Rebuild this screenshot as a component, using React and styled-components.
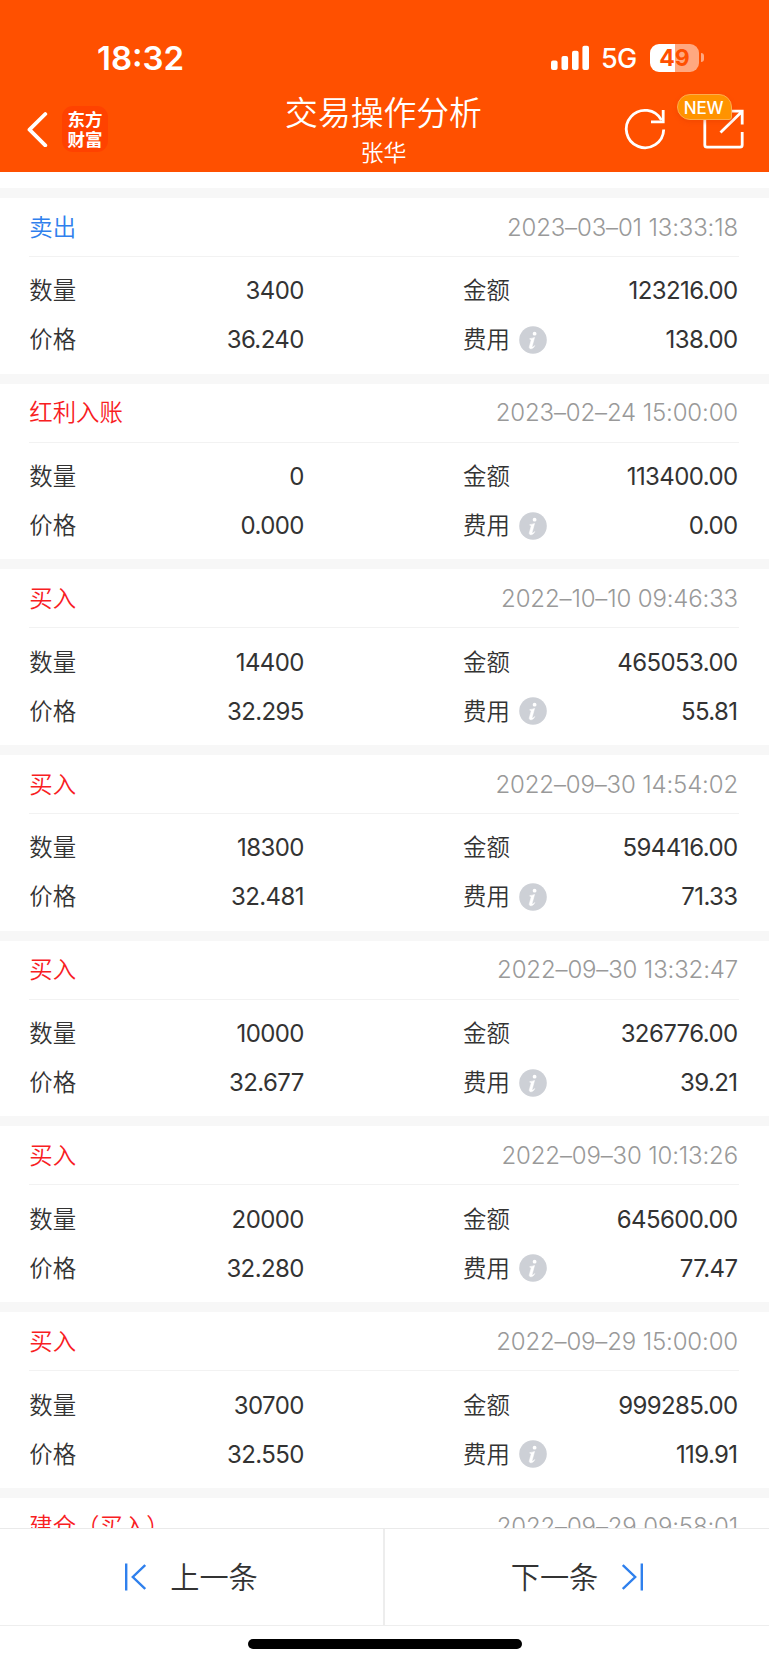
import React from 'react';
import styled, { createGlobalStyle } from 'styled-components';

const GlobalStyle = createGlobalStyle`
    * {
        box-sizing: border-box;
    }
    body {
        margin: 0;
        background: #fff;
        color: #333;
        font-family: Inter, "Noto Sans CJK SC", sans-serif;
    }
`;
const Screen = styled.div`
    display: flex;
    flex-direction: column;
    width: 769px;
    height: 1665px;
    overflow: hidden;
`;
const Header = styled.header`
    flex: none;
    height: 172px;
    background: #ff5000;
    color: #fff;
`;
const StatusBar = styled.div`
    display: flex;
    align-items: center;
    justify-content: space-between;
    height: 94px;
    padding: 21px 65px 0 97px;
`;
const Clock = styled.div`
    font-size: 33px;
    font-weight: 600;
    line-height: 40px;
`;
const StatusIcons = styled.div`
    display: flex;
    align-items: center;
`;
const Network = styled.span`
    width: 36px;
    margin: 2px 13px 0 11px;
    font-size: 27px;
    font-weight: 500;
    line-height: 32px;
    letter-spacing: -0.6px;
`;
const Battery = styled.div`
    display: flex;
    align-items: center;
    justify-content: center;
    width: 49px;
    height: 28px;
    border-radius: 9px;
    background: linear-gradient(to right, #fff 50%, #ffa880 50%);
    color: #ff5000;
    font-size: 23px;
    font-weight: 700;
    line-height: 28px;
`;
const BatteryTip = styled.span`
    width: 3px;
    height: 9px;
    margin-left: 2px;
    border-radius: 0 5px 5px 0;
    background: #ffa880;
`;
const NavBar = styled.div`
    display: grid;
    grid-template-columns: 240px 1fr 240px;
    height: 78px;
`;
const NavLeft = styled.div`
    display: flex;
    align-items: flex-start;
    padding: 12px 0 0 25px;
    svg {
        margin-top: 5px;
    }
`;
const Logo = styled.div`
    width: 46px;
    height: 46px;
    margin-left: 14px;
    padding-top: 4px;
    border-radius: 11px;
    background: #ff4200;
    font-size: 17.5px;
    font-weight: 700;
    line-height: 19.5px;
    text-align: center;
`;
const Heading = styled.div`
    padding-right: 2px;
    text-align: center;
`;
const Title = styled.h1`
    margin: 0;
    font-size: 32.8px;
    font-weight: 350;
    line-height: 39px;
`;
const SubTitle = styled.div`
    font-size: 23px;
    font-weight: 350;
    line-height: 40px;
`;
const NavRight = styled.div`
    display: flex;
    align-items: flex-start;
    justify-content: flex-end;
    padding: 12px 25px 0 0;
`;
const Share = styled.div`
    position: relative;
    height: 46px;
    margin-left: 35px;
`;
const Badge = styled.span`
    position: absolute;
    left: -26px;
    top: -12px;
    width: 55px;
    height: 26px;
    padding-right: 2px;
    border: 1px solid #ffab4d;
    border-radius: 13px 13px 3px 13px;
    background: #ff9300;
    box-shadow: 0 2px 4px rgba(220, 60, 0, 0.35);
    font-size: 17px;
    font-weight: 500;
    line-height: 26px;
    letter-spacing: -0.2px;
    text-align: center;
`;
const List = styled.main`
    flex: 1;
    min-height: 0;
    padding-top: 16px;
    overflow: hidden;
`;
const Card = styled.section`
    height: 185.7px;
    padding: 0 30px 0 29.3px;
    border-top: 10px solid #f7f7f7;
`;
const CardHead = styled.div`
    display: flex;
    align-items: center;
    justify-content: space-between;
    height: 59px;
    border-bottom: 1px solid #f2f2f2;
`;
const Kind = styled.span`
    padding-bottom: 3px;
    color: ${props => (props.$sell ? '#2f80ed' : '#f8201f')};
    font-size: 23.4px;
    font-weight: 350;
`;
const Time = styled.time`
    padding-right: 1px;
    color: #999;
    font-size: 24px;
    font-weight: 350;
    letter-spacing: -0.15px;
`;
const Details = styled.div`
    display: grid;
    grid-template-columns: 276px 276px;
    grid-auto-rows: 49px;
    justify-content: space-between;
    padding-top: 9.4px;
`;
const Field = styled.div`
    display: flex;
    align-items: center;
    svg {
        margin-left: 9px;
    }
`;
const Label = styled.span`
    padding-bottom: 3px;
    font-size: 23.4px;
    font-weight: 350;
`;
const Value = styled.span`
    margin-left: auto;
    padding-right: 1.5px;
    font-size: 24px;
    font-weight: 370;
    letter-spacing: -0.6px;
`;
const Footer = styled.footer`
    display: flex;
    flex: none;
    height: 98px;
    border-top: 1px solid #eaeaea;
    border-bottom: 1px solid #eee;
    background: #fff;
`;
const Pager = styled.button`
    display: flex;
    align-items: center;
    justify-content: center;
    gap: 24px;
    width: ${props => (props.$next ? '384px' : '385px')};
    padding: 0;
    border: 0;
    border-right: ${props => (props.$next ? '0' : '2px solid #ededed')};
    background: none;
    color: #333;
    font-family: inherit;
`;
const PagerText = styled.span`
    padding-bottom: 4px;
    font-size: 29.2px;
    font-weight: 350;
`;
const HomeArea = styled.div`
    display: flex;
    flex: none;
    justify-content: center;
    height: 39px;
    padding-top: 13px;
`;
const HomeBar = styled.div`
    width: 274px;
    height: 10px;
    border-radius: 5px;
    background: #000;
`;

const records = [
    { kind: '卖出', sell: true, time: '2023–03–01 13:33:18', count: '3400', amount: '123216.00', price: '36.240', fee: '138.00' },
    { kind: '红利入账', time: '2023–02–24 15:00:00', count: '0', amount: '113400.00', price: '0.000', fee: '0.00' },
    { kind: '买入', time: '2022–10–10 09:46:33', count: '14400', amount: '465053.00', price: '32.295', fee: '55.81' },
    { kind: '买入', time: '2022–09–30 14:54:02', count: '18300', amount: '594416.00', price: '32.481', fee: '71.33' },
    { kind: '买入', time: '2022–09–30 13:32:47', count: '10000', amount: '326776.00', price: '32.677', fee: '39.21' },
    { kind: '买入', time: '2022–09–30 10:13:26', count: '20000', amount: '645600.00', price: '32.280', fee: '77.47' },
    { kind: '买入', time: '2022–09–29 15:00:00', count: '30700', amount: '999285.00', price: '32.550', fee: '119.91' },
    { kind: '建仓（买入）', time: '2022–09–29 09:58:01' },
];

const SignalIcon = () => (
    <svg width="39" height="26" viewBox="0 0 39 26" fill="#fff">
        <rect x="0" y="15.5" width="6.6" height="9.5" rx="2" />
        <rect x="10.5" y="11" width="6.6" height="14" rx="2" />
        <rect x="21" y="5.7" width="6.6" height="19.3" rx="2" />
        <rect x="31.4" y="0.8" width="6.6" height="24.2" rx="2" />
    </svg>
);
const BackIcon = () => (
    <svg width="23" height="36" viewBox="0 0 23 36" fill="none" stroke="#fff" strokeWidth="3.8">
        <path d="M20.3 3 L4.5 18.7 L20.3 34.3" strokeLinecap="round" strokeLinejoin="round" />
    </svg>
);
const RefreshIcon = () => (
    <svg width="46" height="46" viewBox="0 0 46 46" fill="none" stroke="#fff" strokeWidth="2.8">
        <path d="M41.7 23.5 A18.7 18.7 0 1 1 39.5 14.2" />
        <path d="M41.2 4 V15.8 H29" />
    </svg>
);
const ShareIcon = () => (
    <svg width="41" height="46" viewBox="0 0 41 46" fill="none" stroke="#fff" strokeWidth="2.8">
        <path d="M1.8 9 V39 Q1.8 41.2 4 41.2 H37 Q39.2 41.2 39.2 39 V26" />
        <path d="M27 5.2 H39.2 V18.5 M38.5 6 L17.5 26.5" />
    </svg>
);
const InfoIcon = () => (
    <svg width="28" height="28" viewBox="0 0 28 28">
        <circle cx="14" cy="14" r="13.8" fill="#cdd0d6" />
        <circle cx="15.6" cy="7.7" r="1.9" fill="#fff" />
        <path
            d="M10.8 12.6 C12.8 12.4 14.4 11.8 15.6 11.4 L13.1 20.5 C13 21.6 14.2 21 15.8 19.5 C15 22 12.2 23.4 10.9 22.5 C10 21.8 10.3 20.8 10.6 19.8 L12.2 13.9 Q12.3 13.2 10.8 13.2 Z"
            fill="#fff"
            stroke="#fff"
            strokeWidth="0.5"
        />
    </svg>
);
const PrevIcon = () => (
    <svg width="21" height="28" viewBox="0 0 21 28" fill="none" stroke="#2f80ed" strokeWidth="2.4">
        <path d="M1.2 0.5 V27.5 M20.2 2 L7.8 14 L20.2 26" />
    </svg>
);
const NextIcon = () => (
    <svg width="21" height="28" viewBox="0 0 21 28" fill="none" stroke="#2f80ed" strokeWidth="2.4">
        <path d="M19.8 0.5 V27.5 M0.8 2 L13.2 14 L0.8 26" />
    </svg>
);

const Record = ({ kind, sell, time, count, amount, price, fee }) => (
    <Card>
        <CardHead>
            <Kind $sell={sell}>{kind}</Kind>
            <Time>{time}</Time>
        </CardHead>
        {count && (
            <Details>
                <Field><Label>数量</Label><Value>{count}</Value></Field>
                <Field><Label>金额</Label><Value>{amount}</Value></Field>
                <Field><Label>价格</Label><Value>{price}</Value></Field>
                <Field><Label>费用</Label><InfoIcon /><Value>{fee}</Value></Field>
            </Details>
        )}
    </Card>
);

export default () => (
    <Screen>
        <GlobalStyle />
        <Header>
            <StatusBar>
                <Clock>18:32</Clock>
                <StatusIcons>
                    <SignalIcon />
                    <Network>5G</Network>
                    <Battery>49</Battery>
                    <BatteryTip />
                </StatusIcons>
            </StatusBar>
            <NavBar>
                <NavLeft>
                    <BackIcon />
                    <Logo>东方<br />财富</Logo>
                </NavLeft>
                <Heading>
                    <Title>交易操作分析</Title>
                    <SubTitle>张华</SubTitle>
                </Heading>
                <NavRight>
                    <RefreshIcon />
                    <Share>
                        <ShareIcon />
                        <Badge>NEW</Badge>
                    </Share>
                </NavRight>
            </NavBar>
        </Header>
        <List>
            {records.map((record, i) => <Record key={i} {...record} />)}
        </List>
        <Footer>
            <Pager><PrevIcon /><PagerText>上一条</PagerText></Pager>
            <Pager $next><PagerText>下一条</PagerText><NextIcon /></Pager>
        </Footer>
        <HomeArea><HomeBar /></HomeArea>
    </Screen>
);
